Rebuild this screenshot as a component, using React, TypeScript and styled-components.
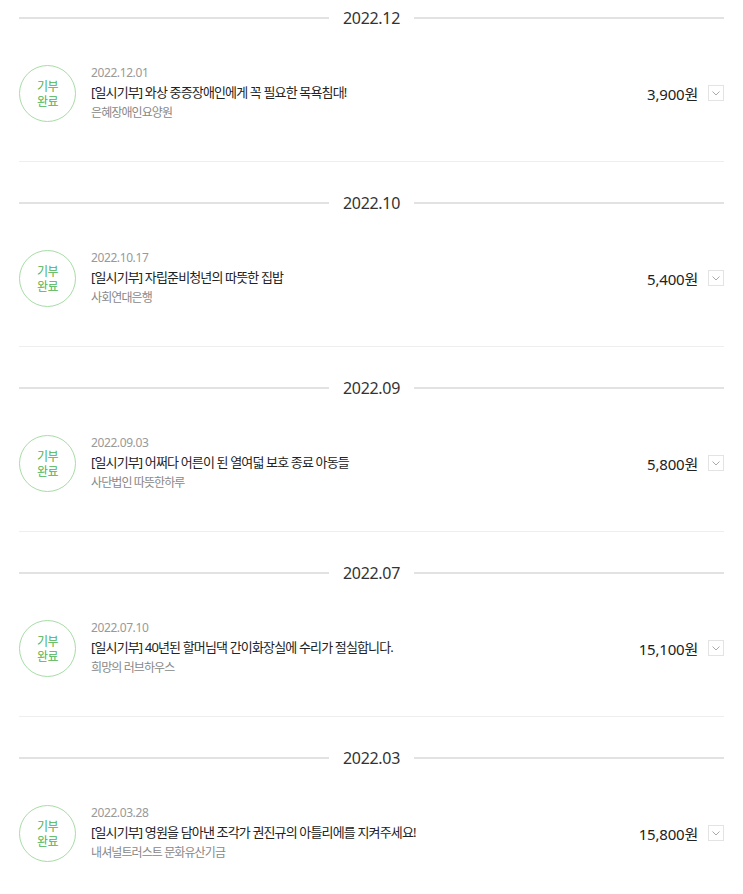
import React from "react";
import styled, { createGlobalStyle } from "styled-components";

const Global = createGlobalStyle`
  html, body { margin: 0; padding: 0; background: #fff; }
  body { font-family: "Noto Sans", "Noto Sans CJK KR", sans-serif; color: #222; }
`;

const Page = styled.div`
  padding: 0 19px;
`;

const Section = styled.section`
  margin-bottom: 23px;
`;

const MonthHeader = styled.div`
  height: 36px;
  display: flex;
  align-items: center;
  gap: 14px;
  &::before, &::after {
    content: "";
    flex: 1;
    height: 2px;
    background: #e2e2e2;
  }
`;

const MonthLabel = styled.span`
  font-size: 16px;
  letter-spacing: -0.3px;
  color: #333;
`;

const Item = styled.div`
  display: flex;
  align-items: center;
  padding: 27px 0 38px;
  border-bottom: 1px solid #eee;
`;

const Badge = styled.div`
  width: 57px;
  height: 57px;
  border-radius: 50%;
  border: 1px solid #a8dca8;
  box-sizing: border-box;
  flex: none;
  display: flex;
  align-items: center;
  justify-content: center;
  text-align: center;
  white-space: pre-line;
  color: #4db34f;
  font-family: "Noto Sans CJK KR", sans-serif;
  font-size: 12px;
  line-height: 15px;
  letter-spacing: -0.5px;
`;

const Info = styled.div`
  flex: 1;
  display: flex;
  flex-direction: column;
  margin-left: 15px;
  min-width: 0;
`;

const DateText = styled.div`
  font-size: 12px;
  line-height: 18px;
  padding-top: 1px;
  color: #999;
  letter-spacing: -0.4px;
`;

const Title = styled.div`
  font-size: 13px;
  line-height: 21px;
  color: #222;
  letter-spacing: -0.85px;
`;

const Org = styled.div`
  font-size: 12px;
  line-height: 20px;
  color: #888;
  letter-spacing: -0.9px;
`;

const Amount = styled.div`
  font-size: 15px;
  color: #222;
  letter-spacing: -0.2px;
  margin-right: 10px;
`;

const Toggle = styled.button`
  width: 16px;
  height: 16px;
  padding: 0;
  border: 1px solid #e3e3e3;
  background: #fff;
  box-sizing: border-box;
  display: flex;
  align-items: center;
  justify-content: center;
  flex: none;
`;

const data = [
  { month: "2022.12", date: "2022.12.01", title: "[일시기부] 와상 중증장애인에게 꼭 필요한 목욕침대!", org: "은혜장애인요양원", amount: "3,900원" },
  { month: "2022.10", date: "2022.10.17", title: "[일시기부] 자립준비청년의 따뜻한 집밥", org: "사회연대은행", amount: "5,400원" },
  { month: "2022.09", date: "2022.09.03", title: "[일시기부] 어쩌다 어른이 된 열여덟 보호 종료 아동들", org: "사단법인 따뜻한하루", amount: "5,800원" },
  { month: "2022.07", date: "2022.07.10", title: "[일시기부] 40년된 할머님댁 간이화장실에 수리가 절실합니다.", org: "희망의 러브하우스", amount: "15,100원" },
  { month: "2022.03", date: "2022.03.28", title: "[일시기부] 영원을 담아낸 조각가 권진규의 아틀리에를 지켜주세요!", org: "내셔널트러스트 문화유산기금", amount: "15,800원" },
];

export default function App() {
  return (
    <Page>
      <Global />
      {data.map((d) => (
        <Section key={d.date}>
          <MonthHeader>
            <MonthLabel>{d.month}</MonthLabel>
          </MonthHeader>
          <Item>
            <Badge>{"기부\n완료"}</Badge>
            <Info>
              <DateText>{d.date}</DateText>
              <Title>{d.title}</Title>
              <Org>{d.org}</Org>
            </Info>
            <Amount>{d.amount}</Amount>
            <Toggle aria-label="펼치기">
              <svg width="8" height="5" viewBox="0 0 8 5">
                <polyline points="0.5,0.5 4,4 7.5,0.5" fill="none" stroke="#aaa" strokeWidth="1" />
              </svg>
            </Toggle>
          </Item>
        </Section>
      ))}
    </Page>
  );
}
